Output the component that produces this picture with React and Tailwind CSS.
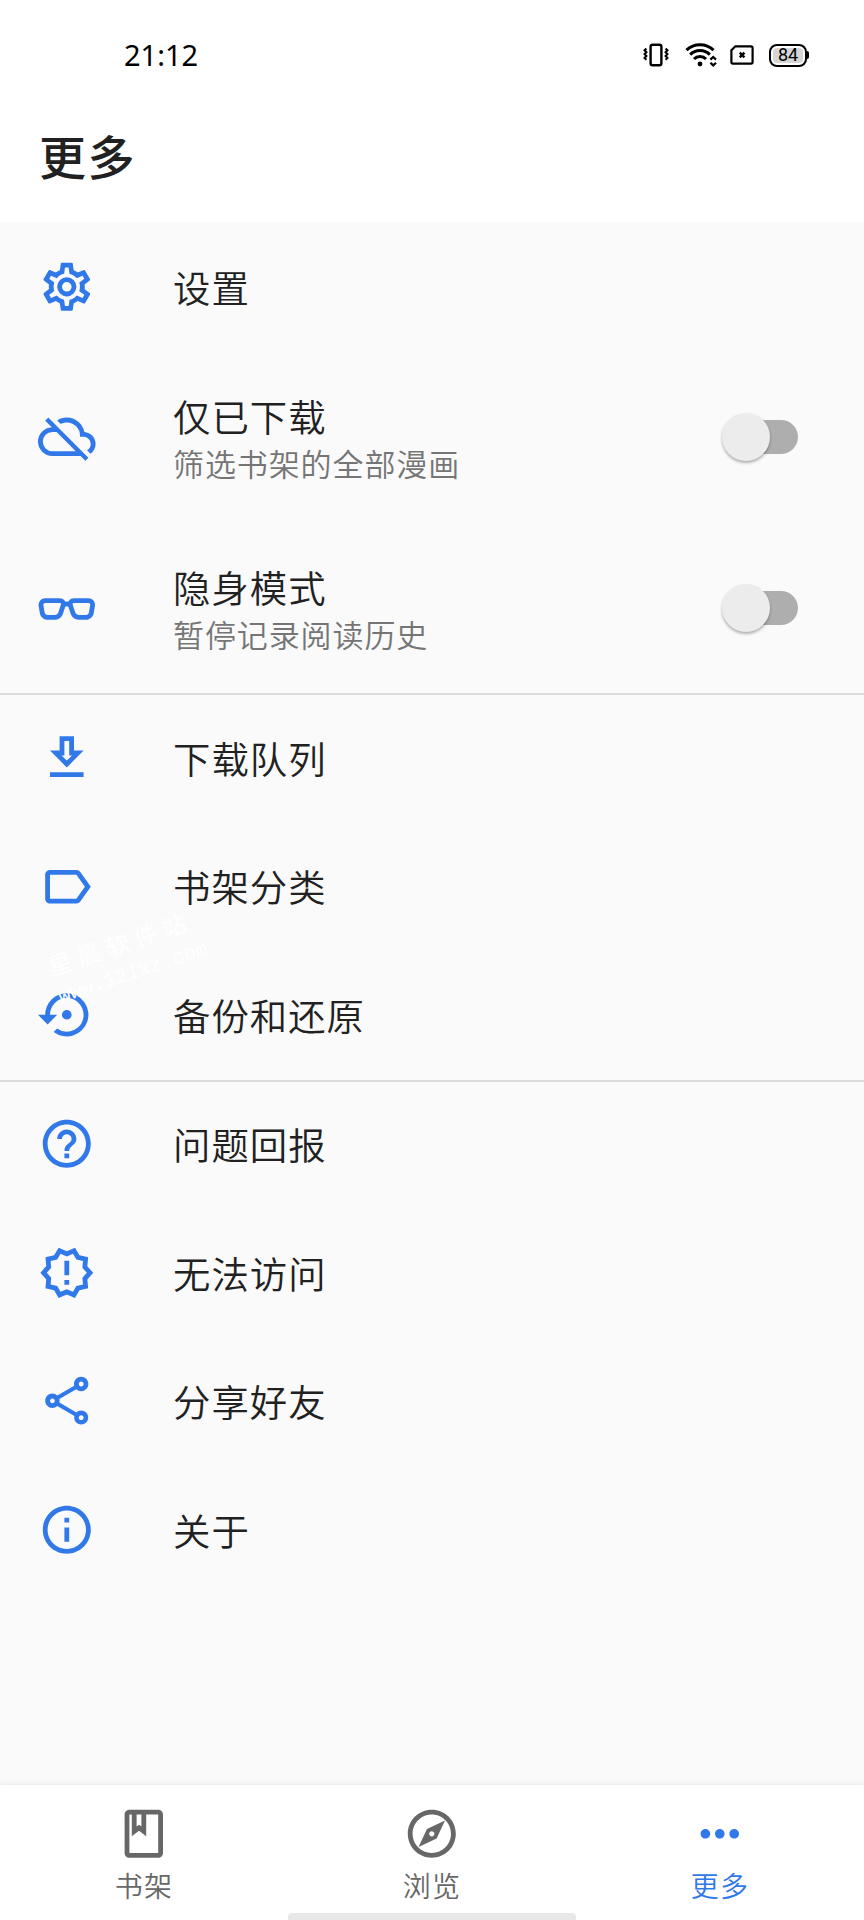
import { useState } from 'react';
import {
  MdHelpOutline,
  MdMoreHoriz,
  MdOutlineClass,
  MdOutlineExplore,
  MdOutlineGetApp,
  MdOutlineInfo,
  MdOutlineLabel,
  MdOutlineNewReleases,
  MdOutlineShare,
  MdSettingsBackupRestore,
} from 'react-icons/md';

function CogIcon({ className }) {
  return (
    <svg viewBox="0 0 24 24" fill="currentColor" className={className}>
      <path d="M12,8A4,4 0 0,1 16,12A4,4 0 0,1 12,16A4,4 0 0,1 8,12A4,4 0 0,1 12,8M12,10A2,2 0 0,0 10,12A2,2 0 0,0 12,14A2,2 0 0,0 14,12A2,2 0 0,0 12,10M10,22C9.75,22 9.54,21.82 9.5,21.58L9.13,18.93C8.5,18.68 7.96,18.34 7.44,17.94L4.95,18.95C4.73,19.03 4.46,18.95 4.34,18.73L2.34,15.27C2.21,15.05 2.27,14.78 2.46,14.63L4.57,12.97L4.5,12L4.57,11L2.46,9.37C2.27,9.22 2.21,8.95 2.34,8.73L4.34,5.27C4.46,5.05 4.73,4.96 4.95,5.05L7.44,6.05C7.96,5.66 8.5,5.32 9.13,5.07L9.5,2.42C9.54,2.18 9.75,2 10,2H14C14.25,2 14.46,2.18 14.5,2.42L14.87,5.07C15.5,5.32 16.04,5.66 16.56,6.05L19.05,5.05C19.27,4.96 19.54,5.05 19.66,5.27L21.66,8.73C21.79,8.95 21.73,9.22 21.54,9.37L19.43,11L19.5,12L19.43,13L21.54,14.63C21.73,14.78 21.79,15.05 21.66,15.27L19.66,18.73C19.54,18.95 19.27,19.04 19.05,18.95L16.56,17.95C16.04,18.34 15.5,18.68 14.87,18.93L14.5,21.58C14.46,21.82 14.25,22 14,22H10M11.25,4L10.88,6.61C9.68,6.86 8.62,7.5 7.85,8.39L5.44,7.35L4.69,8.65L6.8,10.2C6.4,11.37 6.4,12.64 6.8,13.8L4.68,15.36L5.43,16.66L7.86,15.62C8.63,16.5 9.68,17.14 10.87,17.38L11.24,20H12.76L13.13,17.39C14.32,17.14 15.37,16.5 16.14,15.62L18.57,16.66L19.32,15.36L17.2,13.81C17.6,12.64 17.6,11.37 17.2,10.2L19.31,8.65L18.56,7.35L16.15,8.39C15.38,7.5 14.32,6.86 13.12,6.62L12.75,4H11.25Z" />
    </svg>
  );
}

function CloudOffIcon({ className }) {
  return (
    <svg viewBox="0 0 24 24" fill="currentColor" className={className}>
      <path d="M7.73,10L15.73,18H6A4,4 0 0,1 2,14A4,4 0 0,1 6,10M3,5.27L5.75,8C2.56,8.15 0,10.77 0,14A6,6 0 0,0 6,20H17.73L19.73,22L21,20.73L4.27,4M19.35,10.03C18.67,6.59 15.64,4 12,4C10.5,4 9.15,4.43 8,5.17L9.45,6.63C10.21,6.23 11.08,6 12,6A5.5,5.5 0 0,1 17.5,11.5V12H19A3,3 0 0,1 22,15C22,16.13 21.36,17.11 20.44,17.62L21.89,19.07C23.16,18.16 24,16.68 24,15C24,12.36 21.95,10.22 19.35,10.03Z" />
    </svg>
  );
}

function GlassesIcon({ className }) {
  return (
    <svg viewBox="0 0 24 24" fill="currentColor" className={className}>
      <path d="M3,10C2.76,10 2.55,10.09 2.41,10.25C2.27,10.4 2.21,10.62 2.24,10.86L2.74,13.85C2.82,14.5 3.4,15 4,15H7C7.64,15 8.36,14.44 8.5,13.82L9.56,10.63C9.6,10.5 9.57,10.31 9.5,10.19C9.39,10.07 9.22,10 9,10H3M7,17H4C2.38,17 0.96,15.74 0.76,14.14L0.26,11.15C0.15,10.3 0.39,9.5 0.91,8.92C1.43,8.34 2.19,8 3,8H9C9.83,8 10.58,8.35 11.06,8.96C11.17,9.11 11.27,9.27 11.35,9.45C11.78,9.36 12.22,9.36 12.64,9.45C12.72,9.27 12.82,9.11 12.94,8.96C13.41,8.35 14.16,8 15,8H21C21.81,8 22.57,8.34 23.09,8.92C23.6,9.5 23.84,10.3 23.74,11.11L23.23,14.18C23.04,15.74 21.61,17 20,17H17C15.44,17 13.92,15.81 13.54,14.3L12.64,11.59C12.26,11.31 11.73,11.31 11.35,11.59L10.43,14.37C10.07,15.82 8.56,17 7,17M15,10C14.78,10 14.61,10.07 14.5,10.19C14.42,10.31 14.4,10.5 14.45,10.7L15.46,13.75C15.64,14.44 16.36,15 17,15H20C20.59,15 21.18,14.5 21.25,13.89L21.76,10.82C21.79,10.62 21.73,10.4 21.59,10.25C21.45,10.09 21.24,10 21,10H15Z" />
    </svg>
  );
}

const ITEMS = [
  { icon: CogIcon, title: '设置' },
  { icon: CloudOffIcon, title: '仅已下载', summary: '筛选书架的全部漫画' },
  { icon: GlassesIcon, title: '隐身模式', summary: '暂停记录阅读历史' },
  { icon: MdOutlineGetApp, title: '下载队列', divider: true },
  { icon: MdOutlineLabel, title: '书架分类' },
  { icon: MdSettingsBackupRestore, title: '备份和还原' },
  { icon: MdHelpOutline, title: '问题回报', divider: true },
  { icon: MdOutlineNewReleases, title: '无法访问' },
  { icon: MdOutlineShare, title: '分享好友' },
  { icon: MdOutlineInfo, title: '关于' },
];

const TABS = [
  { icon: MdOutlineClass, label: '书架' },
  { icon: MdOutlineExplore, label: '浏览' },
  { icon: MdMoreHoriz, label: '更多' },
];

function StatusBar() {
  return (
    <div className="flex h-[110px] items-center justify-between pr-[55px] pl-[124px] text-black">
      <span className="pb-[2px] font-['Noto_Sans',sans-serif] text-[29px] leading-none">21:12</span>
      <div className="flex items-center">
        <svg viewBox="0 0 26 24" fill="none" stroke="currentColor" className="h-6 w-[26px]">
          <rect x="7.6" y="1.7" width="10.8" height="20.6" rx="2" strokeWidth="2.4" />
          <path d="M3.4 5.5 1.6 7.3l1.8 1.9-1.8 1.9 1.8 1.9-1.8 1.9 1.8 1.8M22.6 5.5l1.8 1.8-1.8 1.9 1.8 1.9-1.8 1.9 1.8 1.9-1.8 1.8" strokeWidth="2.1" />
        </svg>
        <svg viewBox="0 0 34 26" fill="none" stroke="currentColor" className="ml-4 h-[26px] w-[34px]">
          <path d="M1.5 8.2a19.5 19.5 0 0 1 27 0" strokeWidth="3.1" />
          <path d="M5.2 12.6a13.7 13.7 0 0 1 19.6 0" strokeWidth="3.1" />
          <path d="M9 17a8.3 8.3 0 0 1 12 0" strokeWidth="3.1" />
          <circle cx="15" cy="22" r="2.4" fill="currentColor" stroke="none" />
          <path d="m25.4 17.6 2.8-2.6 2.8 2.6M25.4 20.8l2.8 2.6 2.8-2.6" strokeWidth="2.2" />
        </svg>
        <svg viewBox="0 0 24 20" fill="none" stroke="currentColor" className="ml-[11px] h-5 w-6">
          <path d="M5.4 1.3H21a1.6 1.6 0 0 1 1.6 1.6v14.2a1.6 1.6 0 0 1-1.6 1.6H3a1.6 1.6 0 0 1-1.6-1.6V5.2z" strokeWidth="2.2" />
          <path d="m9.8 7.6 4.6 4.8m0-4.8-4.6 4.8" strokeWidth="2.4" />
        </svg>
        <div className="ml-[15px] flex items-center">
          <div className="flex h-[23px] w-[38px] items-center justify-center rounded-[8px] border-[2.5px] border-black bg-white p-[2px]">
            <span className="flex h-full w-full items-center justify-center rounded-[4px] bg-[#d6d6d6] font-[Roboto,sans-serif] text-[18px] leading-none">
              84
            </span>
          </div>
          <span className="h-2 w-[2px] rounded-r bg-black" />
        </div>
      </div>
    </div>
  );
}

function Toggle() {
  const [on, setOn] = useState(false);
  return (
    <button
      type="button"
      role="switch"
      aria-checked={on}
      onClick={() => setOn(!on)}
      className={
        on
          ? 'mr-[66px] flex h-[34px] w-[76px] items-center justify-end rounded-full bg-[#9dc0f6]'
          : 'mr-[66px] flex h-[34px] w-[76px] items-center rounded-full bg-gradient-to-r from-transparent from-30% to-[#aeaeae] to-30%'
      }
    >
      <span className="h-12 w-12 shrink-0 rounded-full bg-[#ececec] shadow-[0_2px_3px_rgba(0,0,0,0.3)]" />
    </button>
  );
}

function Item({ icon: Icon, title, summary, divider }) {
  const height = summary ? 'h-[171.2px]' : 'h-[128.7px]';
  const line = divider ? 'shadow-[inset_0_2px_0_#dcdcdc]' : '';
  return (
    <li className={`flex items-center pl-[38.4px] ${height} ${line}`}>
      <Icon className="h-[57.6px] w-[57.6px] shrink-0 text-[#3178e9]" />
      <div className="ml-[77px] flex-1 pt-[6px] font-[350]">
        <p className="text-[37.4px] leading-[52px] tracking-[1px] text-[#212121]">{title}</p>
        {summary && (
          <p className="text-[31px] leading-[42px] tracking-[0.9px] text-[#757575]">{summary}</p>
        )}
      </div>
      {summary && <Toggle />}
    </li>
  );
}

export default function App() {
  return (
    <div className="relative flex h-[1920px] w-[864px] flex-col overflow-hidden bg-[#fafafa] font-['Liberation_Sans','Noto_Sans_CJK_SC',sans-serif]">
      <header className="h-[222.4px] shrink-0 bg-white">
        <StatusBar />
        <h1 className="pl-[39px] text-[47px] leading-[97px] font-medium tracking-[1.5px] text-[#212121]">更多</h1>
      </header>

      <ul className="flex-1">
        {ITEMS.map((item) => (
          <Item key={item.title} {...item} />
        ))}
      </ul>

      <nav className="flex h-[135.4px] shrink-0 flex-col justify-between bg-white shadow-[0_-1px_5px_rgba(0,0,0,0.08)]">
        <div className="grid grid-cols-3 pt-5">
          {TABS.map(({ icon: Icon, label }) => (
            <div
              key={label}
              className={`flex flex-col items-center ${label === '更多' ? 'text-[#3178e9]' : 'text-[#676767]'}`}
            >
              <Icon className="h-[57.6px] w-[57.6px]" />
              <span className="mt-1.5 text-[28px] leading-[40px] font-[350] tracking-[1.2px]">{label}</span>
            </div>
          ))}
        </div>
        <div className="h-[7px] w-72 self-center rounded-t-[4px] bg-[#e8e8e8]" />
      </nav>

      {/* faint site stamp floating over the list */}
      <div className="pointer-events-none absolute top-[926px] left-[50px] w-[170px] -rotate-[18.5deg] whitespace-nowrap text-white">
        <p className="text-[24px] leading-[30px] tracking-[6px]">星晨软件站</p>
        <p className="font-['Liberation_Mono',monospace] text-[20px] leading-[32px]">www.121xz.com</p>
      </div>
    </div>
  );
}
